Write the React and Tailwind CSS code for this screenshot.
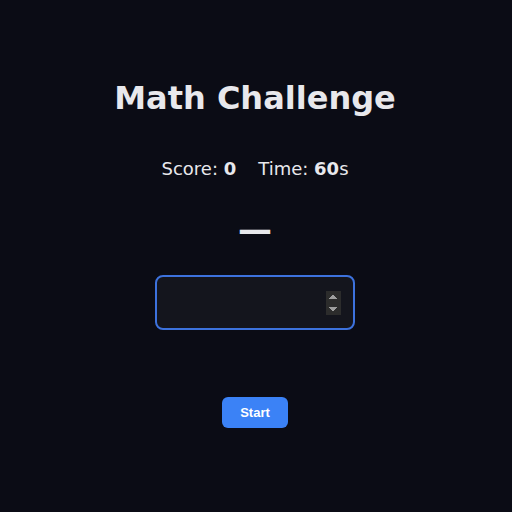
export default function App() {
  return (
    <div className="min-h-screen w-full bg-[#0b0c15] flex flex-col items-center pr-[2px] text-[#e8e8ec]" style={{ fontFamily: '"DejaVu Sans", sans-serif' }}>
      <h1 className="mt-[78px] text-[32px] font-bold leading-[40px]">Math Challenge</h1>
      <div className="mt-[39px] text-[18px] leading-[24px] flex gap-[22px]">
        <span>Score: <b>0</b></span>
        <span>Time: <b>60</b>s</span>
      </div>
      <div className="mt-[28px] text-[34px] font-bold leading-[40px]">—</div>
      <input
        type="number"
        autoFocus
        className="mt-[26px] w-[200px] h-[55px] rounded-[8px] border-2 border-[#3d72dd] bg-[#14151d] px-3 text-[20px] text-white outline-none [color-scheme:dark]"
      />
      <button className="mt-[67px] h-[31px] w-[66px] rounded-[6px] bg-[#3b82f6] text-white text-[13px] font-bold" style={{ fontFamily: '"Liberation Sans", Arial, sans-serif' }}>
        Start
      </button>
    </div>
  );
}
